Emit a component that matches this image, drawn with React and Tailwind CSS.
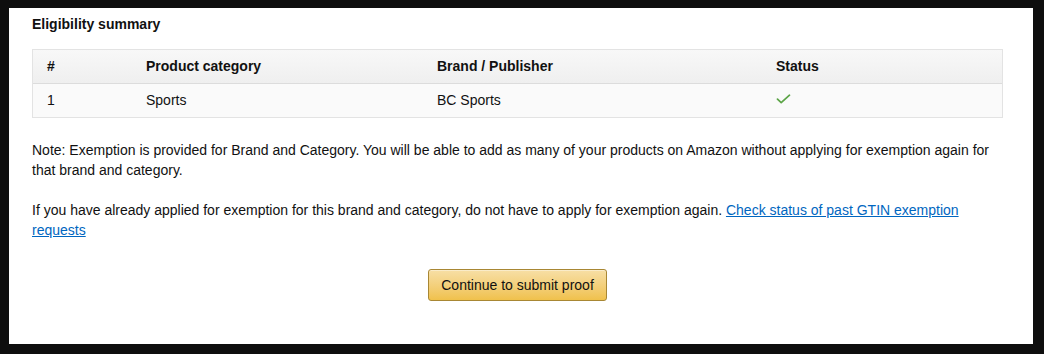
import React from "react";

const rows = [{ id: 1, category: "Sports", brand: "BC Sports", ok: true }];

function Check() {
  return (
    <svg width="15" height="10" viewBox="0 0 15 10" fill="none">
      <path d="M1.5 5.2 L5.2 8.6 L13.5 1.2" stroke="#5ba446" strokeWidth="1.7" strokeLinecap="round" strokeLinejoin="round" />
    </svg>
  );
}

export default function App() {
  return (
    <div className="w-[1044px] h-[354px] bg-[#0e0e0e] pt-[8px] pl-[9px] pr-[11px] pb-[10px] font-['Liberation_Sans',Arial,sans-serif] text-[14px] text-[#111]">
      <div className="h-full bg-white pl-[23px] pr-[30px] pt-[6px]">
        {/* Title */}
        <h2 className="text-[14px] font-bold leading-[20px] h-[20px]">Eligibility summary</h2>

        {/* Table */}
        <div className="mt-[15px] border border-[#e3e3e3] flex flex-col">
          <div className="flex h-[34px] items-center bg-gradient-to-b from-[#f8f8f8] to-[#efefef] border-b border-[#dcdcdc] font-bold">
            <div className="w-[99px] pl-[14px]">#</div>
            <div className="w-[291px] pl-[14px]">Product category</div>
            <div className="w-[339px] pl-[14px]">Brand / Publisher</div>
            <div className="flex-1 pl-[14px]">Status</div>
          </div>
          {rows.map((r) => (
            <div key={r.id} className="flex h-[33px] items-center bg-[#fafafa]">
              <div className="w-[99px] pl-[14px]">{r.id}</div>
              <div className="w-[291px] pl-[14px]">{r.category}</div>
              <div className="w-[339px] pl-[14px]">{r.brand}</div>
              <div className="flex-1 pl-[14px] pb-[3px]">{r.ok && <Check />}</div>
            </div>
          ))}
        </div>

        {/* Notes */}
        <p className="mt-[22px] leading-[20px]">
          Note: Exemption is provided for Brand and Category. You will be able to add as many of your products on Amazon without applying for exemption again for that brand and category.
        </p>
        <p className="mt-[20px] leading-[20px]">
          If you have already applied for exemption for this brand and category, do not have to apply for exemption again.{" "}
          <a href="#" className="text-[#0066c0] underline">Check status of past GTIN exemption requests</a>
        </p>

        {/* Action */}
        <div className="flex justify-center mt-[29px]">
          <button className="h-[32px] px-[12px] rounded-[3px] border border-[#a88734] bg-gradient-to-b from-[#f7dfa5] to-[#f0c14b] text-[14px] text-[#111] shadow-[inset_0_1px_0_rgba(255,255,255,0.4)]">
            Continue to submit proof
          </button>
        </div>
      </div>
    </div>
  );
}
